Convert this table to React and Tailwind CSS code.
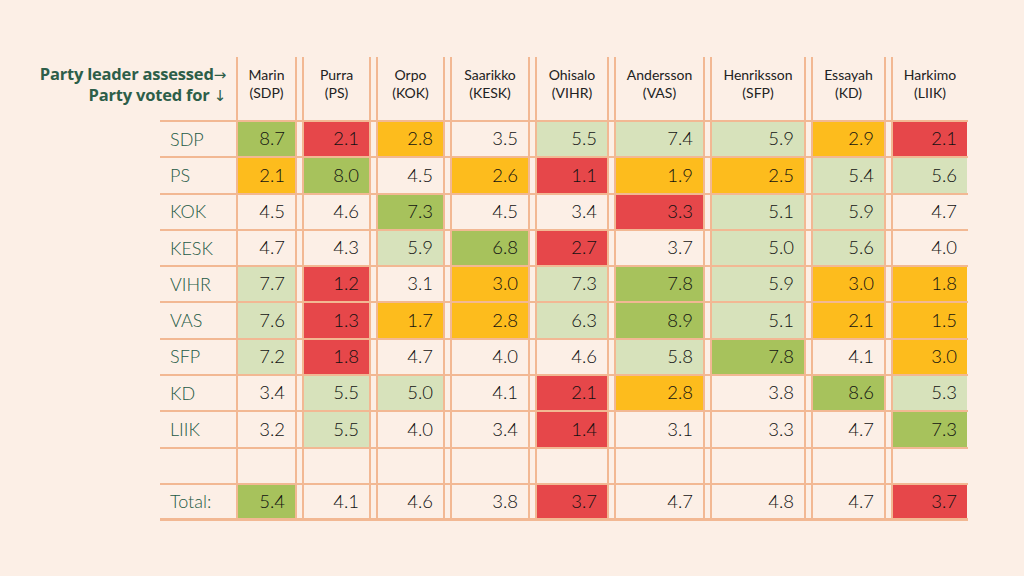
import React from "react";

const COLS = [
  { w: "w-[61px]", name: "Marin", party: "(SDP)" },
  { w: "w-[69px]", name: "Purra", party: "(PS)" },
  { w: "w-[69px]", name: "Orpo", party: "(KOK)" },
  { w: "w-[80px]", name: "Saarikko", party: "(KESK)" },
  { w: "w-[74px]", name: "Ohisalo", party: "(VIHR)" },
  { w: "w-[91px]", name: "Andersson", party: "(VAS)" },
  { w: "w-[96px]", name: "Henriksson", party: "(SFP)" },
  { w: "w-[75px]", name: "Essayah", party: "(KD)" },
  { w: "w-[76px]", name: "Harkimo", party: "(LIIK)" },
];

const FILL = {
  G: "bg-[#a7c25c]",
  L: "bg-[#d7e2bb]",
  O: "bg-[#fdbc1d]",
  R: "bg-[#e6474a]",
  "-": "",
};

const ROWS = [
  ["SDP", "8.7 G|2.1 R|2.8 O|3.5 -|5.5 L|7.4 L|5.9 L|2.9 O|2.1 R"],
  ["PS", "2.1 O|8.0 G|4.5 -|2.6 O|1.1 R|1.9 O|2.5 O|5.4 L|5.6 L"],
  ["KOK", "4.5 -|4.6 -|7.3 G|4.5 -|3.4 -|3.3 R|5.1 L|5.9 L|4.7 -"],
  ["KESK", "4.7 -|4.3 -|5.9 L|6.8 G|2.7 R|3.7 -|5.0 L|5.6 L|4.0 -"],
  ["VIHR", "7.7 L|1.2 R|3.1 -|3.0 O|7.3 L|7.8 G|5.9 L|3.0 O|1.8 O"],
  ["VAS", "7.6 L|1.3 R|1.7 O|2.8 O|6.3 L|8.9 G|5.1 L|2.1 O|1.5 O"],
  ["SFP", "7.2 L|1.8 R|4.7 -|4.0 -|4.6 -|5.8 L|7.8 G|4.1 -|3.0 O"],
  ["KD", "3.4 -|5.5 L|5.0 L|4.1 -|2.1 R|2.8 O|3.8 -|8.6 G|5.3 L"],
  ["LIIK", "3.2 -|5.5 L|4.0 -|3.4 -|1.4 R|3.1 -|3.3 -|4.7 -|7.3 G"],
  ["", "  -|  -|  -|  -|  -|  -|  -|  -|  -"],
  ["Total:", "5.4 G|4.1 -|4.6 -|3.8 -|3.7 R|4.7 -|4.8 -|4.7 -|3.7 R"],
];

function cellBorder(i) {
  return i === COLS.length - 1
    ? "border-l-2 border-[#f2b893]"
    : "border-x-2 border-[#f2b893]";
}

function HeaderRow() {
  return (
    <div className="flex h-[65px] border-b-2 border-[#f2b893]">
      <div className="w-[76px] shrink-0 flex justify-end pr-[10px] pt-[7px]">
        <div className="whitespace-nowrap text-right font-['Open_Sans',sans-serif] text-[16.5px] leading-[20px] font-bold tracking-[-0.2px] text-[#2d5e49]">
          <div>
            Party leader assessed
            <span className="font-['DejaVu_Sans',sans-serif] font-normal text-[15px]">→</span>
          </div>
          <div>
            Party voted for{" "}
            <span className="font-['DejaVu_Sans',sans-serif] font-normal text-[15px]">↓</span>
          </div>
        </div>
      </div>
      <div className="flex gap-[5px]">
        {COLS.map((c, i) => (
          <div
            key={c.name}
            className={`${c.w} shrink-0 ${cellBorder(i)} pt-[9px] text-center text-[14px] leading-[18px] text-[#222222]`}
          >
            <div>{c.name}</div>
            <div>{c.party}</div>
          </div>
        ))}
      </div>
    </div>
  );
}

function DataRow({ label, data, last }) {
  const cells = data.split("|").map((s) => {
    const t = s.trim();
    const parts = t.split(" ");
    if (parts.length === 1) return { v: "", f: "-" };
    return { v: parts[0], f: parts[1] };
  });
  return (
    <div
      className={`flex h-[36.3px] ${
        last ? "border-b-[3px]" : "border-b-2"
      } border-[#f2b893]`}
    >
      <div className="w-[76px] shrink-0 flex items-center pl-[10px] text-[18px] font-light text-[#245a45]">
        {label}
      </div>
      <div className="flex gap-[5px]">
        {cells.map((c, i) => (
          <div key={i} className={`${COLS[i].w} shrink-0 ${cellBorder(i)}`}>
            <div
              className={`h-full flex items-center justify-end pr-[10px] text-[18.5px] font-light text-[#111111] ${FILL[c.f]}`}
            >
              {c.v}
            </div>
          </div>
        ))}
      </div>
    </div>
  );
}

export default function App() {
  return (
    <div className="w-[1024px] h-[576px] bg-[#fcefe6] pl-[160px] pt-[57px] font-['Lato',sans-serif] overflow-hidden">
      <div className="flex flex-col w-[808px]">
        <HeaderRow />
        {ROWS.map(([label, data], i) => (
          <DataRow key={i} label={label} data={data} last={i === ROWS.length - 1} />
        ))}
      </div>
    </div>
  );
}
